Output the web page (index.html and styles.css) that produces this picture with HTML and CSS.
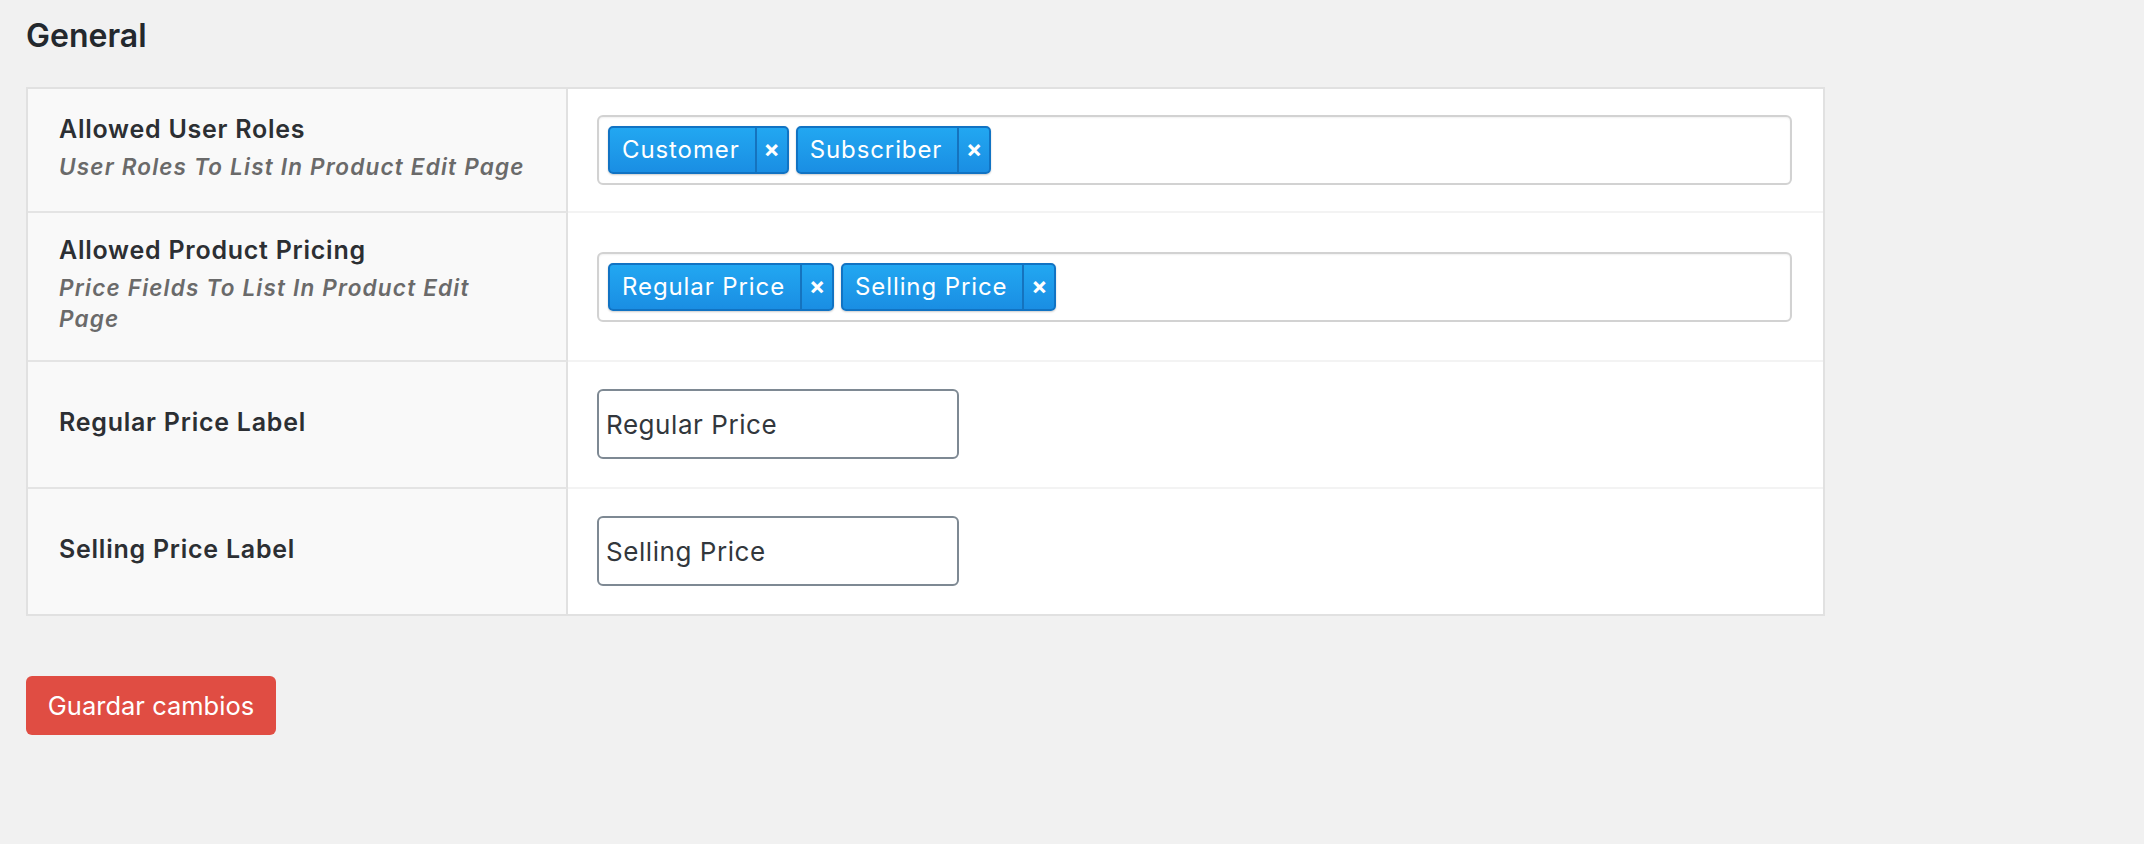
FILE: index.html
```html
<!DOCTYPE html>
<html lang="en">
<head>
    <meta charset="UTF-8">
    <meta name="viewport" content="width=device-width, initial-scale=1.0">
    <title>General Settings</title>
    <link rel="stylesheet" href="styles.css">
</head>
<body>

    <div class="wrap">
        <h2 class="section-title">General</h2>

        <!-- Settings table -->
        <table class="form-table">
            <tr>
                <th>
                    <div class="label">Allowed User Roles</div>
                    <div class="desc">User Roles To List In Product Edit Page</div>
                </th>
                <td>
                    <div class="tag-box">
                        <span class="tag"><span class="tag-label">Customer</span><span class="tag-remove">&times;</span></span>
                        <span class="tag"><span class="tag-label">Subscriber</span><span class="tag-remove">&times;</span></span>
                    </div>
                </td>
            </tr>
            <tr>
                <th>
                    <div class="label">Allowed Product Pricing</div>
                    <div class="desc">Price Fields To List In Product Edit Page</div>
                </th>
                <td>
                    <div class="tag-box">
                        <span class="tag"><span class="tag-label">Regular Price</span><span class="tag-remove">&times;</span></span>
                        <span class="tag"><span class="tag-label">Selling Price</span><span class="tag-remove">&times;</span></span>
                    </div>
                </td>
            </tr>
            <tr>
                <th>
                    <div class="label">Regular Price Label</div>
                </th>
                <td class="input-cell">
                    <input class="text-input" type="text" value="Regular Price">
                </td>
            </tr>
            <tr>
                <th>
                    <div class="label">Selling Price Label</div>
                </th>
                <td class="input-cell">
                    <input class="text-input" type="text" value="Selling Price">
                </td>
            </tr>
        </table>

        <button class="save-btn">Guardar cambios</button>
    </div>

</body>
</html>
```

FILE: styles.css
```css
* {
    margin: 0;
    padding: 0;
    box-sizing: border-box;
    font-family: Inter, "Noto Sans", sans-serif;
}

body {
    background-color: #f1f1f1;
    color: #23282d;
}

.wrap {
    padding: 17px 0 0 26px;
}

.section-title {
    font-size: 32px;
    font-weight: 600;
    line-height: 38px;
    color: #23282d;
    margin-bottom: 32px;
}

.form-table {
    width: 1799px;
    border-collapse: separate;
    border-spacing: 0;
    border: 2px solid #e1e1e1;
    background: #fff;
}

.form-table th {
    width: 540px;
    background-color: #f9f9f9;
    text-align: left;
    vertical-align: middle;
    padding: 21px 30px 26px 31px;
    border-right: 2px solid #e1e1e1;
    border-bottom: 2px solid #e4e4e4;
}

.form-table td {
    vertical-align: middle;
    padding: 26px 31px 26px 29px;
    border-bottom: 2px solid #f3f3f3;
}

.form-table td.input-cell {
    padding: 27px 31px 28px 29px;
}

.form-table tr:last-child th,
.form-table tr:last-child td {
    border-bottom: none;
}

.label {
    font-size: 25px;
    font-weight: 600;
    letter-spacing: 0.75px;
    line-height: 32px;
    color: #2c2f33;
}

.desc {
    margin-top: 6px;
    font-size: 22.5px;
    font-weight: 600;
    font-style: italic;
    letter-spacing: 1.2px;
    line-height: 31px;
    color: #6a6a6a;
}

.tag-box {
    display: flex;
    gap: 7px;
    height: 70px;
    padding: 9px;
    border: 2px solid #d2d2d2;
    border-radius: 6px;
    background: #fff;
    box-shadow: inset 0 1px 2px rgba(0,0,0,0.06);
}

.tag {
    display: flex;
    height: 48px;
    border: 2px solid #1173c3;
    border-radius: 5px;
    background: linear-gradient(#22a7f1, #1a8ee3);
    color: white;
    box-shadow: 0 1px 2px rgba(0,0,0,0.2);
}

.tag-label {
    padding: 0 15px 0 12px;
    font-size: 24px;
    letter-spacing: 0.9px;
    line-height: 44px;
}

.tag-remove {
    width: 32px;
    border-left: 2px solid #1573be;
    text-align: center;
    font-size: 24px;
    font-weight: 700;
    line-height: 42px;
}

.text-input {
    display: block;
    width: 362px;
    height: 70px;
    padding: 0 7px;
    border: 2px solid #7e8993;
    border-radius: 6px;
    background: #fff;
    font-size: 26px;
    letter-spacing: 0.55px;
    color: #32373c;
}

.save-btn {
    margin-top: 60px;
    width: 250px;
    height: 59px;
    border: none;
    border-radius: 6px;
    background-color: #e04d43;
    color: white;
    font-size: 25.5px;
    cursor: pointer;
}
```
